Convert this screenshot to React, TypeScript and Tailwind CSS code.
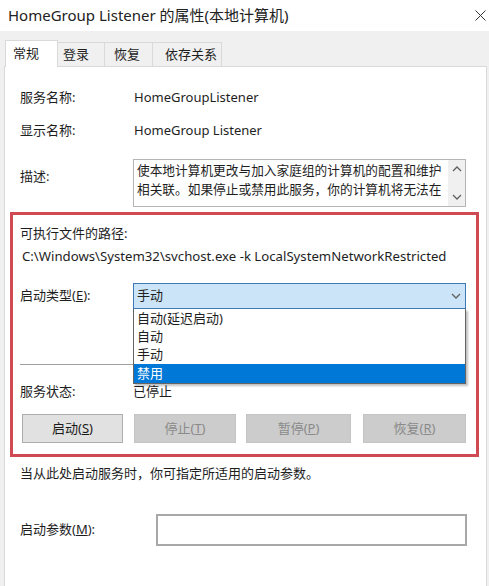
const font = { fontFamily: '"Noto Sans", "Noto Sans CJK SC", sans-serif' };

function Chevron({ up = false }: { up?: boolean }) {
  return (
    <svg width="10" height="6" viewBox="0 0 10 6" className={up ? "rotate-180" : ""}>
      <path d="M1 1 L5 5 L9 1" fill="none" stroke="#606060" strokeWidth="1.3" />
    </svg>
  );
}

function Btn({ label, w, disabled = false }: { label: React.ReactNode; w: string; disabled?: boolean }) {
  return (
    <div
      className={`${w} h-[29px] flex items-center justify-center border text-[13px] ${
        disabled ? "bg-[#cccccc] border-[#c4c4c4] text-[#8a8a8a]" : "bg-[#e1e1e1] border-[#adadad] text-[#1a1a1a]"
      }`}
    >
      {label}
    </div>
  );
}

export default function App() {
  return (
    <div className="w-[489px] h-[586px] bg-[#f0f0f0] overflow-hidden flex flex-col text-[#1e1e1e]" style={font}>
      <div className="h-[31px] bg-white flex items-center justify-between pl-[8px] pr-[2px] shrink-0">
        <span className="text-[15px] text-[#222]">HomeGroup Listener 的属性(本地计算机)</span>
        <svg width="11" height="11" viewBox="0 0 11 11" className="mr-[1px]">
          <path d="M0.5 0.5 L10.5 10.5 M10.5 0.5 L0.5 10.5" stroke="#333" strokeWidth="1" />
        </svg>
      </div>

      <div className="flex items-end pl-[5px] pt-[9px] shrink-0">
        <div className="w-[53px] h-[27px] bg-white border border-b-0 border-[#d9d9d9] flex items-center pl-[7px] text-[13px] -mb-px relative z-10">
          常规
        </div>
        <div className="w-[47px] h-[24px] bg-[#f0f0f0] border border-l-0 border-b-0 border-[#d9d9d9] flex items-center pl-[5px] text-[13px]">
          登录
        </div>
        <div className="w-[48px] h-[24px] bg-[#f0f0f0] border border-l-0 border-b-0 border-[#d9d9d9] flex items-center pl-[9px] text-[13px]">
          恢复
        </div>
        <div className="w-[69px] h-[24px] bg-[#f0f0f0] border border-l-0 border-b-0 border-[#d9d9d9] flex items-center pl-[12px] text-[13px]">
          依存关系
        </div>
      </div>

      <div className="flex-1 ml-[4px] mr-[2px] bg-white border border-b-0 border-[#d9d9d9] text-[13px] pt-[19px]">
        <div className="flex items-center h-[24px] pl-[15px]">
          <span className="w-[114px]">服务名称:</span>
          <span>HomeGroupListener</span>
        </div>
        <div className="flex items-center h-[24px] mt-[9px] pl-[15px]">
          <span className="w-[114px]">显示名称:</span>
          <span>HomeGroup Listener</span>
        </div>
        <div className="flex mt-[16px] pl-[15px]">
          <span className="w-[113px] pt-[8px]">描述:</span>
          <div className="w-[333px] h-[48px] border border-[#b5b5b5] flex">
            <div className="flex-1 pl-[3px] pt-[1px] leading-[19px] text-[12.7px] overflow-hidden whitespace-nowrap">
              <div>使本地计算机更改与加入家庭组的计算机的配置和维护</div>
              <div>相关联。如果停止或禁用此服务，你的计算机将无法在</div>
            </div>
            <div className="w-[17px] bg-[#f0f0f0] flex flex-col items-center justify-between py-[6px]">
              <Chevron up />
              <Chevron />
            </div>
          </div>
        </div>

        <div className="ml-[5px] mt-[5px] w-[469px] h-[245px] border-[3px] border-[#cf4a52] pl-[7px] pt-[9px]">
          <div className="h-[20px] flex items-center">可执行文件的路径:</div>
          <div className="h-[20px] flex items-center mt-[3px] pl-[2px] text-[13.2px]">
            C:\Windows\System32\svchost.exe -k LocalSystemNetworkRestricted
          </div>
          <div className="flex items-center mt-[16px] h-[26px]">
            <span className="w-[113px]">
              启动类型(<span className="underline">E</span>):
            </span>
            <div className="relative w-[333px] h-[26px]">
              <div className="w-full h-full bg-[#cce4f7] border border-[#3d7ab3] flex items-center justify-between pl-[3px] pr-[4px]">
                <span>手动</span>
                <Chevron />
              </div>
              <div className="absolute left-0 top-[26px] w-[333px] bg-white border border-[#646464] border-t-0 shadow-[2px_2px_2px_rgba(0,0,0,0.25)] z-20">
                <div className="h-[19px] flex items-center pl-[3px]">自动(延迟启动)</div>
                <div className="h-[18px] flex items-center pl-[3px]">自动</div>
                <div className="h-[18px] flex items-center pl-[3px]">手动</div>
                <div className="h-[19px] flex items-center pl-[3px] bg-[#0078d7] text-white">禁用</div>
              </div>
            </div>
          </div>
          <div className="w-[113px] h-px bg-[#a0a0a0] mt-[55px]" />
          <div className="flex items-center h-[22px] mt-[16px]">
            <span className="w-[113px]">服务状态:</span>
            <span>已停止</span>
          </div>
          <div className="flex mt-[11px] pl-[2px]">
            <Btn w="w-[101px]" label={<>启动(<span className="underline">S</span>)</>} />
            <div className="w-[11px]" />
            <Btn w="w-[102px]" disabled label={<>停止(<span className="underline">T</span>)</>} />
            <div className="w-[10px]" />
            <Btn w="w-[105px]" disabled label={<>暂停(<span className="underline">P</span>)</>} />
            <div className="w-[12px]" />
            <Btn w="w-[103px]" disabled label={<>恢复(<span className="underline">R</span>)</>} />
          </div>
        </div>

        <div className="pl-[15px] h-[20px] flex items-center mt-[7px]">当从此处启动服务时，你可指定所适用的启动参数。</div>
        <div className="flex items-center pl-[15px] mt-[30px]">
          <span className="w-[136px]">
            启动参数(<span className="underline">M</span>):
          </span>
          <div className="w-[311px] h-[32px] border-2 border-[#a8a8a8] bg-white" />
        </div>
      </div>
    </div>
  );
}
